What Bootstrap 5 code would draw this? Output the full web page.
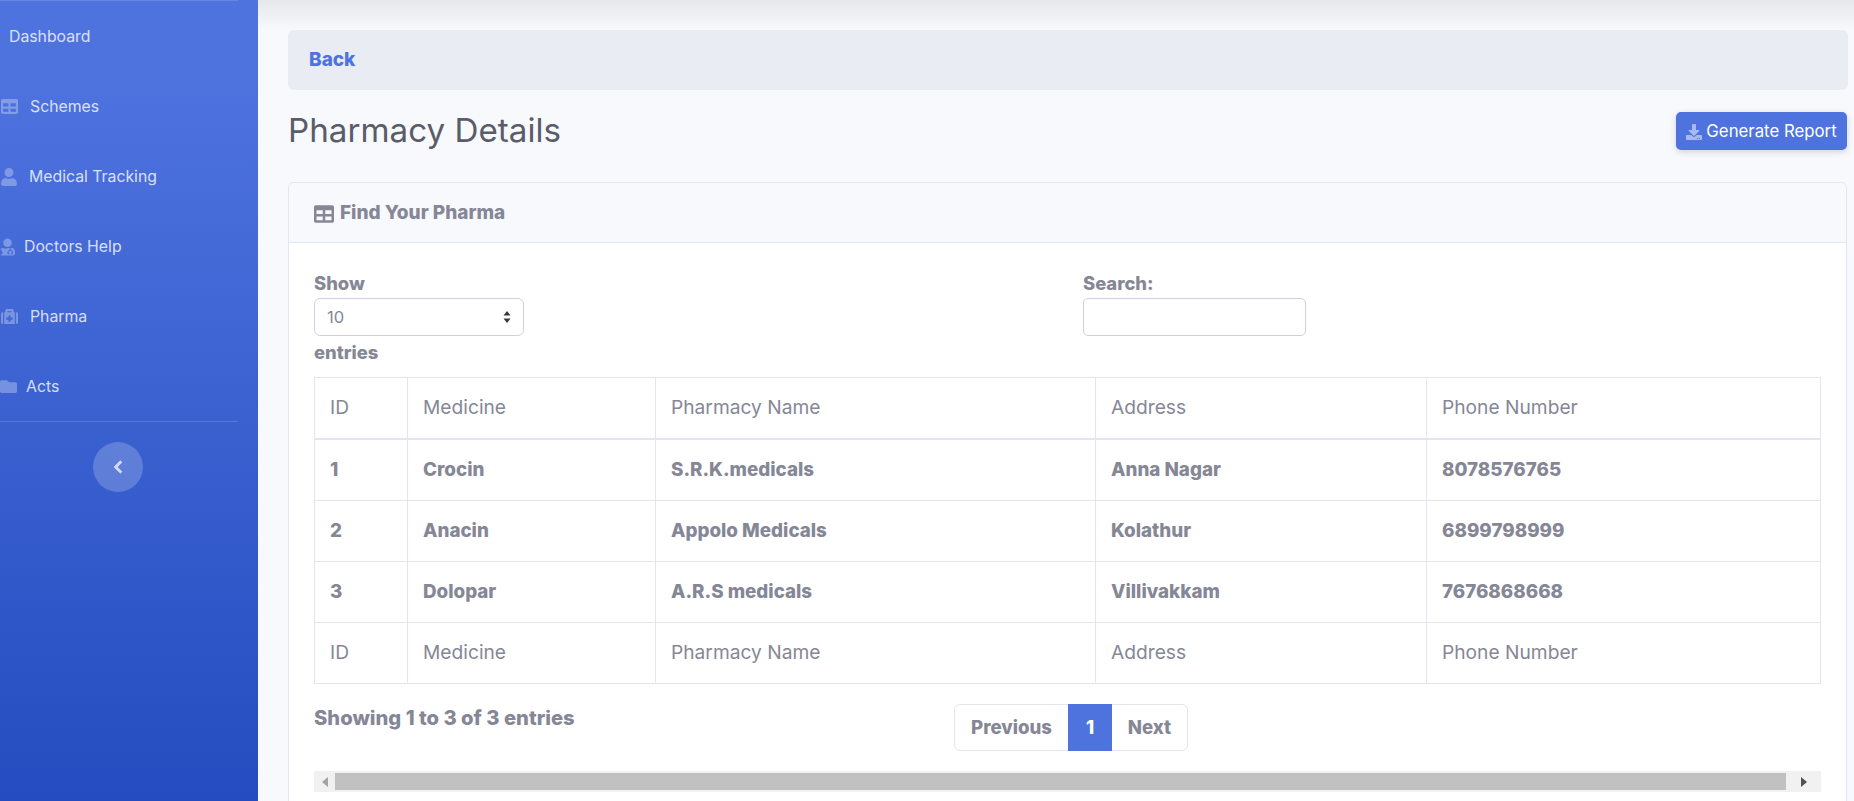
<!DOCTYPE html>
<html lang="en">
<head>
<meta charset="utf-8">
<title>Pharmacy Details</title>
<link rel="stylesheet" href="https://cdn.jsdelivr.net/npm/bootstrap@5.3.0/dist/css/bootstrap.min.css">
<style>
html,body{height:801px;overflow:hidden}
body{font-family:"Inter","Noto Sans",sans-serif;font-size:16px;color:#858796;background:#f8f9fc}
.shell{height:801px}
.side{width:258px;flex:none;background:linear-gradient(180deg,#4e73df 10%,#224abe 106%);overflow:hidden}
.side-line{height:1px;width:238px;background:rgba(255,255,255,.15);flex:none}
.side-link{height:70px;padding-top:1px;color:rgba(255,255,255,.8);text-decoration:none;font-size:15.8px;flex:none}
.side-link svg{fill:rgba(255,255,255,.3);flex:none}
.first-link{padding-left:9px}
.pad-a{padding-left:1px;gap:12px}
.pad-b{padding-left:0;gap:9px}
.pad-c{padding-left:0;gap:9px}
.toggle-wrap{width:236px;padding-top:20px}
.toggle-disc{width:50px;height:50px;border-radius:50%;background:rgba(255,255,255,.2);border:0;padding:0}
.toggle-disc svg{width:10px;height:14px;fill:rgba(255,255,255,.7);stroke:rgba(255,255,255,.7);stroke-width:30}
.workspace{min-width:0;background-image:linear-gradient(#e6e7ea,#f8f9fc 30px)}
.inner{padding:30px 6px 0 30px;min-height:0}
.crumb-bar{height:60px;background:#eaecf4;border-radius:6px;padding:0 21px;flex:none}
.crumb-bar a{color:#4e73df;font-weight:800;text-decoration:none;font-size:19px}
.title-row{height:92px;padding-top:21px;align-items:flex-start;flex:none}
.page-title{font-size:33.2px;font-weight:400;color:#5a5c69;margin:0;line-height:38px}
.report-btn{width:171px;height:38px;margin-top:1px;padding:1px 0 0;background:#4e73df;border:0;border-radius:5px;color:#fff;font-size:16.8px;box-shadow:0 2px 6px rgba(58,59,69,.2);margin-right:1px}
.report-btn svg{width:16px;height:16px;fill:rgba(255,255,255,.5)}
.pharma-card{border:1px solid #e3e6f0;border-radius:6px;border-bottom:0;border-bottom-left-radius:0;border-bottom-right-radius:0;margin-right:1px;background:#fff;min-height:0;flex:1 1 auto;overflow:hidden}
.pharma-head{height:60px;background:#f8f9fc;border-bottom:1px solid #e3e6f0;padding:2px 25px 0;font-weight:800;font-size:19px;flex:none;gap:6px}
.pharma-head svg{width:20px;height:20px;fill:#858796;flex:none}
.pharma-body{padding:27px 24px 0 25px}
.filter-row{height:107px;flex:none}
.filter-col{width:769px}
.filter-label{font-weight:800;font-size:18.4px;line-height:27px;height:28px}
.page-select{width:210px;height:38px;border:1px solid #d1cfe6;border-radius:6px;padding:0 12px;font-size:16.5px;color:#858796;background-size:8px 12px;background-position:right 12px center;background-image:url("data:image/svg+xml,%3csvg xmlns='http://www.w3.org/2000/svg' viewBox='0 0 8 12'%3e%3cpath fill='%23343a40' d='M4 0l3.5 4.5H.5zM4 12L.5 7.500h7z'/%3e%3c/svg%3e")}
.search-box{width:223px;height:38px;border:1px solid #d1cfe6;border-radius:5px}
.entries-label{font-weight:800;font-size:18.4px;line-height:28px;margin-top:2px}
.data-grid{width:1506px;table-layout:fixed;border-collapse:collapse;margin:0;color:#858796;font-size:19.2px}
.data-grid th,.data-grid td{border:1px solid #e3e6f0;padding:0 15px;height:61.3px;vertical-align:middle;color:#858796;background:transparent;box-shadow:none}
.data-grid th{font-weight:400;padding-bottom:2px}
.data-grid thead th{border-bottom-width:2px}
.data-grid tbody td{font-weight:800;font-size:18.8px}
.c1{width:93px}.c2{width:248px}.c3{width:440px}.c4{width:331px}.c5{width:394px}
.foot-row{height:87px;flex:none}
.foot-info{width:640px;font-weight:800;font-size:20.2px;padding-top:20px;line-height:28px}
.pager{margin:20px 0 0;--bs-pagination-border-color:#e3e6f0;--bs-pagination-color:#858796;--bs-pagination-active-bg:#4e73df;--bs-pagination-active-border-color:#4e73df}
.pager .page-link{height:47px;font-weight:800;font-size:18.6px;display:flex;align-items:center;justify-content:center;padding:0;background:#fff;color:#858796}
.pager .active .page-link{background:#4e73df;color:#fff;border-color:#4e73df}
.pg-prev{width:115px}.pg-one{width:43px}.pg-next{width:76px}
.fake-scroll{width:1507px;height:21px;background:#f1f1f1;flex:none;align-items:stretch}
.fake-arrow{width:21px;flex:none}
.fake-arrow svg{width:6px;height:10px}
.arrow-l svg{fill:#a3a3a3}
.arrow-r svg{fill:#505050}
.fake-thumb{flex:1 1 auto;margin:2px 0;background:#c1c1c1}
.arrow-r{width:35px}
</style>
</head>
<body>
<div class="shell d-flex">
  <aside class="side d-flex flex-column">
    <div class="side-line"></div>
    <a href="#" class="side-link first-link d-flex align-items-center">Dashboard</a>
    <a href="#" class="side-link d-flex align-items-center pad-a"><svg width="17" height="17" viewBox="0 0 512 512"><path d="M464 32H48C21.49 32 0 53.49 0 80v352c0 26.51 21.49 48 48 48h416c26.51 0 48-21.49 48-48V80c0-26.51-21.49-48-48-48zM224 416H64v-96h160v96zm0-160H64v-96h160v96zm224 160H288v-96h160v96zm0-160H288v-96h160v96z"/></svg>Schemes</a>
    <a href="#" class="side-link d-flex align-items-center pad-a"><svg width="16" height="18" viewBox="0 0 448 512"><path d="M224 256c70.7 0 128-57.3 128-128S294.7 0 224 0 96 57.3 96 128s57.3 128 128 128zm89.6 32h-16.7c-22.2 10.2-46.9 16-72.9 16s-50.6-5.8-72.9-16h-16.7C60.2 288 0 348.2 0 422.4V464c0 26.5 21.5 48 48 48h352c26.5 0 48-21.5 48-48v-41.6c0-74.2-60.2-134.4-134.4-134.4z"/></svg>Medical Tracking</a>
    <a href="#" class="side-link d-flex align-items-center pad-b"><svg width="15" height="18" viewBox="0 0 448 512"><path d="M224 256c70.7 0 128-57.3 128-128S294.7 0 224 0 96 57.3 96 128s57.3 128 128 128zM104 424c0 13.3 10.7 24 24 24s24-10.7 24-24-10.7-24-24-24-24 10.7-24 24zm216-135.4v49c36.5 7.4 64 39.8 64 78.4v41.7c0 7.6-5.4 14.2-12.9 15.7l-32.2 6.4c-4.3.9-8.5-1.9-9.4-6.3l-3.1-15.7c-.9-4.3 1.9-8.6 6.3-9.4l19.3-3.9V416c0-62.8-96-65.1-96 1.9v26.7l19.3 3.9c4.3.9 7.1 5.1 6.3 9.4l-3.1 15.7c-.9 4.3-5.1 7.1-9.4 6.3l-31.2-4.2c-7.9-1.1-13.8-7.8-13.8-15.9V416c0-38.6 27.5-70.9 64-78.4v-45.2c-11-3.5-22.5-6-34.6-6h-16.7c-22.2 10.2-46.9 16-72.9 16s-50.7-5.8-72.9-16h-16.7c-12.1 0-23.6 2.5-34.6 6v82.1c23.1 6.9 40 28.1 40 53.5 0 30.9-25.1 56-56 56s-56-25.1-56-56c0-25.4 16.9-46.6 40-53.5v-70.4C27.5 303.4 0 348.7 0 401v47c0 35.3 28.7 64 64 64h320c35.3 0 64-28.7 64-64v-47c0-52.3-27.5-97.6-68-112.4z"/></svg>Doctors Help</a>
    <a href="#" class="side-link d-flex align-items-center pad-a"><svg width="17" height="17" viewBox="0 0 512 512"><path d="M96 480h320V128h-32V80c0-26.5-21.5-48-48-48H176c-26.5 0-48 21.5-48 48v48H96v352zm96-384h128v32H192V96zm160 248c0 4.4-3.6 8-8 8h-56v56c0 4.4-3.6 8-8 8h-48c-4.400 0-8-3.600-8-8v-56h-56c-4.400 0-8-3.600-8-8v-48c0-4.400 3.600-8 8-8h56v-56c0-4.400 3.600-8 8-8h48c4.400 0 8 3.600 8 8v56h56c4.400 0 8 3.600 8 8v48zM512 176v256c0 26.500-21.500 48-48 48h-16V128h16c26.500 0 48 21.500 48 48zM64 480H48c-26.500 0-48-21.500-48-48V176c0-26.500 21.500-48 48-48h16v352z"/></svg>Pharma</a>
    <a href="#" class="side-link d-flex align-items-center pad-c"><svg width="17" height="17" viewBox="0 0 512 512"><path d="M464 128H272l-64-64H48C21.49 64 0 85.49 0 112v288c0 26.51 21.49 48 48 48h416c26.51 0 48-21.49 48-48V176c0-26.51-21.49-48-48-48z"/></svg>Acts</a>
    <div class="side-line"></div>
    <div class="toggle-wrap d-flex justify-content-center">
      <button class="toggle-disc d-flex align-items-center justify-content-center" aria-label="Collapse"><svg viewBox="0 0 320 512"><path d="M34.52 239.03L228.87 44.69c9.37-9.37 24.57-9.37 33.94 0l22.67 22.67c9.36 9.36 9.37 24.52.04 33.9L131.49 256l154.02 154.75c9.34 9.38 9.32 24.54-.04 33.9l-22.67 22.67c-9.37 9.37-24.57 9.37-33.94 0L34.52 272.97c-9.37-9.37-9.37-24.57 0-33.94z"/></svg></button>
    </div>
  </aside>
  <main class="workspace flex-grow-1 d-flex flex-column">
    <div class="inner d-flex flex-column flex-grow-1">
      <div class="crumb-bar d-flex align-items-center"><a href="#">Back</a></div>
      <div class="title-row d-flex justify-content-between">
        <h1 class="page-title">Pharmacy Details</h1>
        <button class="report-btn d-flex align-items-center justify-content-center gap-1"><svg viewBox="0 0 512 512"><path d="M216 0h80c13.3 0 24 10.7 24 24v168h87.7c17.8 0 26.7 21.5 14.1 34.1L269.7 378.3c-7.5 7.5-19.8 7.5-27.3 0L90.1 226.1c-12.6-12.6-3.7-34.1 14.1-34.1H192V24c0-13.3 10.7-24 24-24zm296 376v112c0 13.3-10.7 24-24 24H24c-13.3 0-24-10.7-24-24V376c0-13.3 10.7-24 24-24h146.7l49 49c20.1 20.1 52.5 20.1 72.6 0l49-49H488c13.3 0 24 10.7 24 24zm-124 88c0-11-9-20-20-20s-20 9-20 20 9 20 20 20 20-9 20-20zm64 0c0-11-9-20-20-20s-20 9-20 20 9 20 20 20 20-9 20-20z"/></svg>Generate Report</button>
      </div>
      <section class="pharma-card d-flex flex-column">
        <div class="pharma-head d-flex align-items-center"><svg viewBox="0 0 512 512"><path d="M464 32H48C21.49 32 0 53.49 0 80v352c0 26.51 21.49 48 48 48h416c26.51 0 48-21.49 48-48V80c0-26.51-21.49-48-48-48zM224 416H64v-96h160v96zm0-160H64v-96h160v96zm224 160H288v-96h160v96zm0-160H288v-96h160v96z"/></svg>Find Your Pharma</div>
        <div class="pharma-body d-flex flex-column">
          <div class="filter-row d-flex">
            <div class="filter-col">
              <div class="filter-label">Show</div>
              <select class="form-select page-select"><option>10</option></select>
              <div class="entries-label">entries</div>
            </div>
            <div>
              <div class="filter-label">Search:</div>
              <input type="search" class="form-control search-box" aria-label="Search">
            </div>
          </div>
          <table class="table data-grid">
            <colgroup><col class="c1"><col class="c2"><col class="c3"><col class="c4"><col class="c5"></colgroup>
            <thead><tr><th>ID</th><th>Medicine</th><th>Pharmacy Name</th><th>Address</th><th>Phone Number</th></tr></thead>
            <tbody>
              <tr><td>1</td><td>Crocin</td><td>S.R.K.medicals</td><td>Anna Nagar</td><td>8078576765</td></tr>
              <tr><td>2</td><td>Anacin</td><td>Appolo Medicals</td><td>Kolathur</td><td>6899798999</td></tr>
              <tr><td>3</td><td>Dolopar</td><td>A.R.S medicals</td><td>Villivakkam</td><td>7676868668</td></tr>
            </tbody>
            <tfoot><tr><th>ID</th><th>Medicine</th><th>Pharmacy Name</th><th>Address</th><th>Phone Number</th></tr></tfoot>
          </table>
          <div class="foot-row d-flex">
            <div class="foot-info">Showing 1 to 3 of 3 entries</div>
            <ul class="pagination pager">
              <li class="page-item pg-prev"><a class="page-link" href="#">Previous</a></li>
              <li class="page-item active pg-one"><a class="page-link" href="#">1</a></li>
              <li class="page-item pg-next"><a class="page-link" href="#">Next</a></li>
            </ul>
          </div>
          <div class="fake-scroll d-flex">
            <div class="fake-arrow arrow-l d-flex align-items-center justify-content-center"><svg viewBox="0 0 6 10"><path d="M6 0v10L0 5z"/></svg></div>
            <div class="fake-thumb"></div>
            <div class="fake-arrow arrow-r d-flex align-items-center justify-content-center"><svg viewBox="0 0 6 10"><path d="M0 0v10l6-5z"/></svg></div>
          </div>
        </div>
      </section>
    </div>
  </main>
</div>
<script src="https://cdn.jsdelivr.net/npm/bootstrap@5.3.0/dist/js/bootstrap.bundle.min.js"></script>
</body>
</html>
